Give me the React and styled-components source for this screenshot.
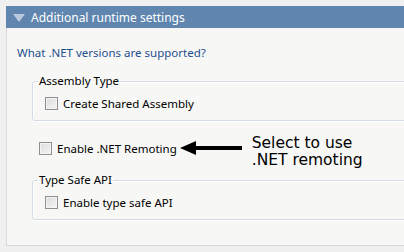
import styled, { createGlobalStyle } from "styled-components";

const GlobalStyle = createGlobalStyle`
  html, body {
    margin: 0;
    padding: 0;
    background: #f0f0f0;
    overflow: hidden;
  }
  body {
    font-family: "Noto Sans", "Open Sans", sans-serif;
    font-size: 11.5px;
  }
`;

const Page = styled.div`
  width: 404px;
  height: 252px;
  padding: 6px 0 0 6px;
  box-sizing: border-box;
  overflow: hidden;
`;

const Panel = styled.div`
  width: 440px;
  display: flex;
  flex-direction: column;
`;

const Header = styled.div`
  height: 22px;
  background: #6086b0;
  display: flex;
  align-items: center;
  gap: 6px;
  padding-left: 7px;
  color: #ffffff;
  font-size: 12px;
`;

const Triangle = styled.span`
  width: 0;
  height: 0;
  border-left: 6px solid transparent;
  border-right: 6px solid transparent;
  border-top: 8px solid #b9cadd;
  margin-top: 1px;
`;

const Body = styled.div`
  height: 218px;
  background: #f7f7f5;
  border-left: 1px solid #d9d9d9;
  border-bottom: 1px solid #d9d9d9;
  padding: 16px 0 0 10px;
  box-sizing: border-box;
  display: flex;
  flex-direction: column;
`;

const Question = styled.div`
  color: #1f4f8f;
  height: 18px;
  line-height: 18px;
`;

const Group = styled.fieldset`
  margin: ${({ $top }) => $top}px 0 0 15px;
  padding: 7px 0 0 12px;
  height: ${({ $h }) => $h}px;
  box-sizing: border-box;
  border: 1px solid #d3dde3;
  border-radius: 3px;
  box-shadow: inset 1px 1px 0 #ffffff, 1px 1px 0 #ffffff;
`;

const Legend = styled.legend`
  padding: 0 1px;
  margin-left: -7px;
  color: #000000;
  line-height: 14px;
`;

const Row = styled.label`
  display: flex;
  align-items: center;
  gap: 5px;
  color: #000000;
  height: 16px;
`;

const Box = styled.span`
  width: 11px;
  height: 11px;
  border: 1px solid #8e8f8f;
  background: linear-gradient(135deg, #dcdcdc 0%, #f4f4f4 100%);
  box-shadow: inset 0 0 0 1px #f4f4f4;
  flex: none;
`;

const RemotingLine = styled.div`
  display: flex;
  align-items: center;
  margin: 14px 0 0 22px;
  height: 26px;
`;

const Arrow = styled.svg`
  margin-left: 3px;
  flex: none;
`;

const Note = styled.div`
  margin-left: 10px;
  padding-top: 7px;
  font-family: "DejaVu Sans", Verdana, sans-serif;
  font-size: 15.5px;
  line-height: 17px;
  color: #000000;
`;

export default function App() {
  return (
    <Page>
      <GlobalStyle />
      <Panel>
        <Header>
          <Triangle />
          <span>Additional runtime settings</span>
        </Header>
        <Body>
          <Question>What .NET versions are supported?</Question>
          <Group $top={12} $h={47}>
            <Legend>Assembly Type</Legend>
            <Row>
              <Box />
              Create Shared Assembly
            </Row>
          </Group>
          <RemotingLine>
            <Row>
              <Box />
              Enable .NET Remoting
            </Row>
            <Arrow width="62" height="16" viewBox="0 0 62 16">
              <path d="M0 8 L16 1 L16 6 L62 6 L62 10 L16 10 L16 15 Z" fill="#000" />
            </Arrow>
            <Note>
              Select to use
              <br />
              .NET remoting
            </Note>
          </RemotingLine>
          <Group $top={12} $h={47}>
            <Legend>Type Safe API</Legend>
            <Row>
              <Box />
              Enable type safe API
            </Row>
          </Group>
        </Body>
      </Panel>
    </Page>
  );
}
